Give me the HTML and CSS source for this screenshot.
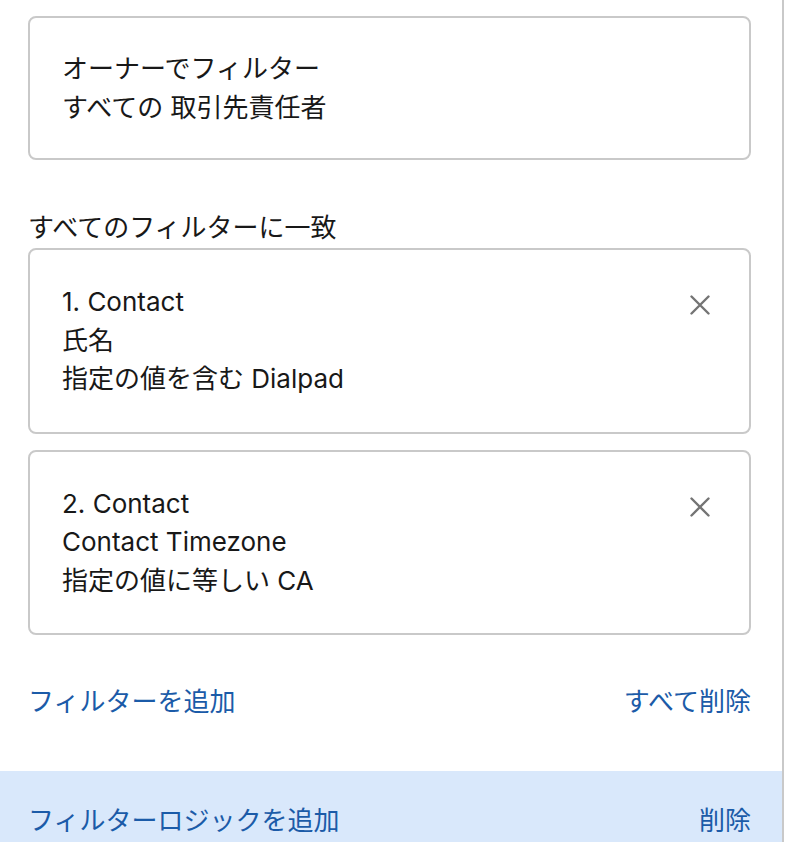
FILE: index.html
```html
<!DOCTYPE html>
<html lang="ja">
<head>
<meta charset="utf-8">
<title>フィルター</title>
<link rel="stylesheet" href="styles.css">
</head>
<body>
<div class="panel">
  <div class="content">
    <div class="card card-owner">
      <div class="card-text">
        <div>オーナーでフィルター</div>
        <div>すべての 取引先責任者</div>
      </div>
    </div>

    <div class="match-label">すべてのフィルターに一致</div>

    <div class="filters">
      <div class="card">
        <div class="card-text">
          <div>1. Contact</div>
          <div>氏名</div>
          <div>指定の値を含む Dialpad</div>
        </div>
        <button class="remove" aria-label="削除">
          <svg viewBox="0 0 20 20" width="20" height="20"><path d="M1.5 1.5 L18.5 18.5 M18.5 1.5 L1.5 18.5" stroke="#747474" stroke-width="2.4" stroke-linecap="round" fill="none"/></svg>
        </button>
      </div>
      <div class="card">
        <div class="card-text">
          <div>2. Contact</div>
          <div>Contact Timezone</div>
          <div>指定の値に等しい CA</div>
        </div>
        <button class="remove" aria-label="削除">
          <svg viewBox="0 0 20 20" width="20" height="20"><path d="M1.5 1.5 L18.5 18.5 M18.5 1.5 L1.5 18.5" stroke="#747474" stroke-width="2.4" stroke-linecap="round" fill="none"/></svg>
        </button>
      </div>
    </div>

    <div class="links">
      <a class="link" href="#">フィルターを追加</a>
      <a class="link" href="#">すべて削除</a>
    </div>
  </div>

  <div class="logic-bar">
    <a class="link" href="#">フィルターロジックを追加</a>
    <a class="link" href="#">削除</a>
  </div>
</div>
</body>
</html>
```

FILE: styles.css
```css
html, body {
  margin: 0;
  padding: 0;
  background: #ffffff;
}

body {
  font-family: "Inter", "Noto Sans CJK JP", sans-serif;
  font-size: 26px;
  line-height: 38.5px;
  color: #181818;
}

.panel {
  width: 782px;
  height: 842px;
  border-right: 2px solid #c9c9c9;
  box-sizing: content-box;
  overflow: hidden;
}

.content {
  padding: 16px 31px 0 28px;
}

.card {
  border: 2px solid #c9c9c9;
  border-radius: 8px;
  padding: 33px 32px;
  display: flex;
  justify-content: space-between;
  align-items: flex-start;
}

.card-owner {
  padding: 32px 32px 31px;
}

.match-label {
  margin-top: 49px;
  height: 38.5px;
  margin-bottom: 0.5px;
}

.filters {
  display: flex;
  flex-direction: column;
  gap: 16px;
}

.remove {
  border: 0;
  background: none;
  padding: 0;
  margin: 12px 7px 0 0;
  width: 20px;
  height: 20px;
  display: block;
  cursor: pointer;
}

.remove svg {
  display: block;
}

.links {
  display: flex;
  justify-content: space-between;
  margin-top: 48px;
}

.link {
  color: #1b5ba8;
  text-decoration: none;
}

.logic-bar {
  margin-top: 49px;
  background: #d9e8fb;
  padding: 31px 31px 31px 28px;
  display: flex;
  justify-content: space-between;
}
```
